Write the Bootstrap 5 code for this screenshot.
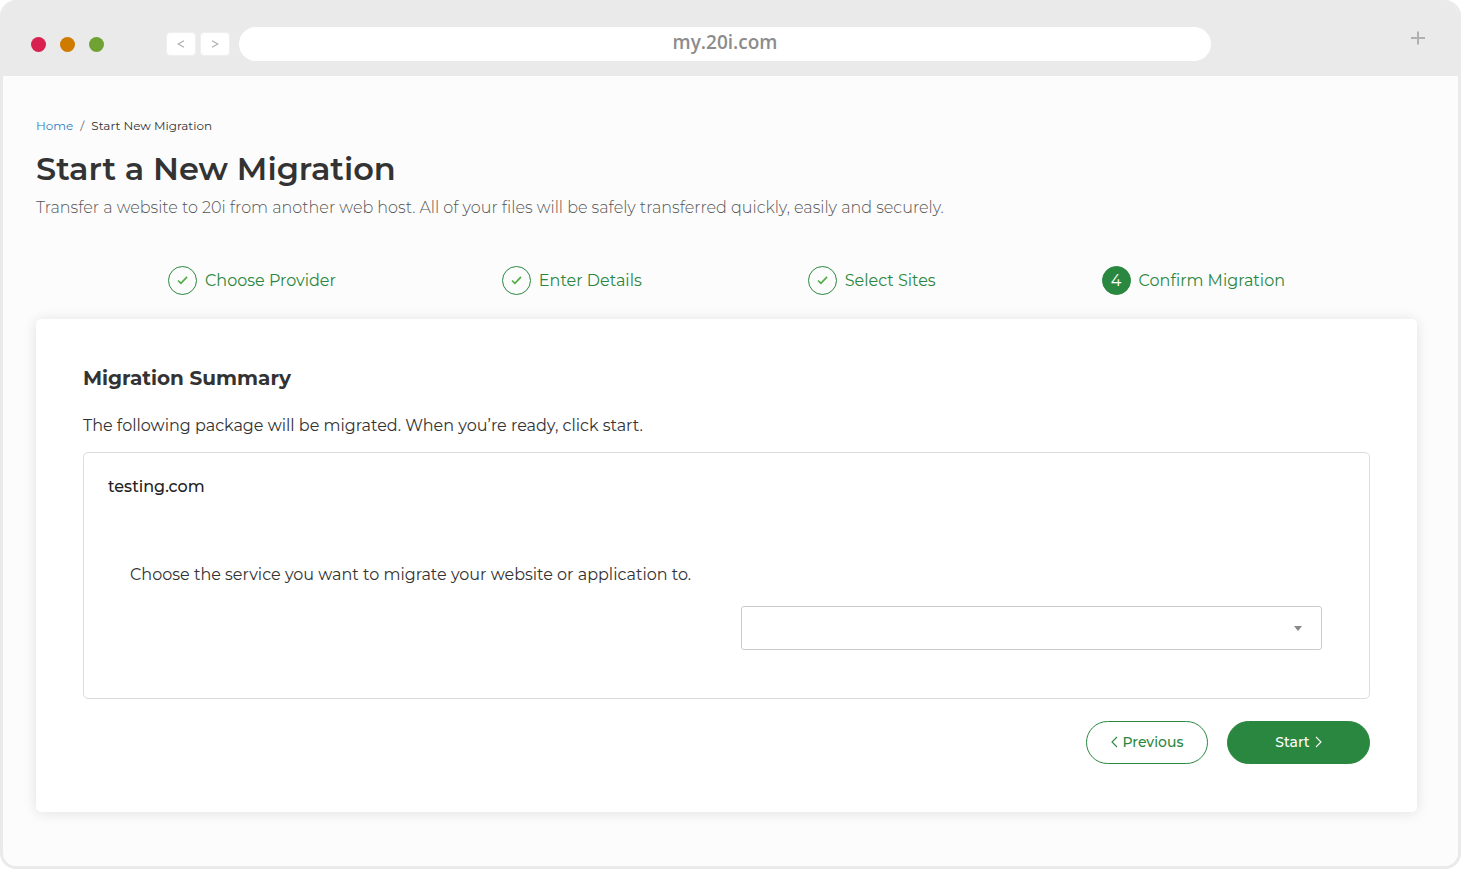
<!DOCTYPE html>
<html lang="en">
<head>
<meta charset="utf-8">
<meta name="viewport" content="width=device-width, initial-scale=1">
<title>Start a New Migration</title>
<link href="https://cdn.jsdelivr.net/npm/bootstrap@5.3.0/dist/css/bootstrap.min.css" rel="stylesheet">
<style>
  :root { --green: #2a873f; --chrome: #eaeaea; --ink: #333; }
  body { font-family: Montserrat, Inter, "Liberation Sans", sans-serif; font-size: 16px; line-height: 24px; color: var(--ink); background: #fff; }
  .browser { min-height: 100vh; padding-bottom: 1px; }
  .browser-frame { border: 3px solid var(--chrome); border-top: 0; border-radius: 16px; background: #fcfcfc; }
  .browser-bar { background: var(--chrome); height: 76px; padding: 12px 33px 0 28px; }
  .dots { gap: 14px; }
  .dot { width: 15px; height: 15px; border-radius: 50%; }
  .dot-red { background: #d92150; } .dot-amber { background: #cf7a00; } .dot-green { background: #6fa232; }
  .keys { margin: 0 9px 0 62px; }
  .nav-key { width: 30px; height: 24px; border: 1px solid #efefef; border-radius: 4px; background: #fff; color: #b0b0b0; }
  .address { min-width: 0; height: 34px; margin-right: 200px; border: 0; border-radius: 17px; background: #fff; color: #8c8c8c; font: 600 19px/30px "Open Sans", sans-serif; padding: 0 0 4px; text-align: center; }
  .new-tab { border: 0; background: none; padding: 0 0 12px; color: #b0b0b0; }
  .page { padding: 38px 41px 50px 33px; }
  .breadcrumb { font-size: 12px; margin-bottom: 7px; --bs-breadcrumb-item-padding-x: 7px; --bs-breadcrumb-item-active-color: #333; }
  .breadcrumb a { color: #2f7fc4; }
  h1 { font-size: 32px; line-height: 40px; font-weight: 600; margin-bottom: 7px; }
  .intro { color: #555; font-weight: 300; }
  .steps { padding: 0 132px; margin: 46px 0 24px; color: var(--green); }
  .step-mark { width: 29px; height: 29px; border: 1px solid var(--green); border-radius: 50%; }
  .step-mark.current { background: var(--green); color: #fff; }
  .panel { background: #fff; border-radius: 5px; box-shadow: 0 1px 14px rgba(0,0,0,.11); padding: 47px 47px 48px; }
  h2 { font-size: 20px; line-height: 24px; font-weight: 700; margin-bottom: 24px; }
  .notice { margin-bottom: 14px; }
  .site { border: 1px solid #dcdcdc; border-radius: 5px; padding: 22px 24px 48px; }
  .site h3 { font-size: 16px; line-height: 24px; font-weight: 500; color: #222; }
  .choice { padding: 64px 23px 0 22px; }
  .choice .row { --bs-gutter-x: 30px; margin-top: 19px; }
  .service { height: 44px; border: 1px solid #ccc; border-radius: 3px; background-position: right 19px center; background-size: 8px 5px;
    background-image: url("data:image/svg+xml,%3Csvg xmlns='http://www.w3.org/2000/svg' viewBox='0 0 8 5'%3E%3Cpath fill='%23888' d='M0 0h8L4 5z'/%3E%3C/svg%3E"); }
  .actions { gap: 19px; margin-top: 22px; }
  .btn-step { height: 43px; border-radius: 22px; font-size: 14px; font-weight: 500; border-color: var(--green); --bs-btn-color: var(--green); --bs-btn-hover-color: #fff; --bs-btn-hover-bg: #206c31; }
  .btn-prev { width: 122px; background: #fff; }
  .btn-start { width: 143px; background: var(--green); --bs-btn-color: #fff; }
</style>
</head>
<body>
<div class="browser d-flex flex-column">
  <div class="browser-frame flex-grow-1 overflow-hidden">
    <header class="browser-bar d-flex align-items-center">
      <div class="dots d-flex flex-shrink-0">
        <span class="dot dot-red"></span><span class="dot dot-amber"></span><span class="dot dot-green"></span>
      </div>
      <div class="keys d-flex gap-1 flex-shrink-0">
        <button class="nav-key p-0 d-flex align-items-center justify-content-center" type="button" aria-label="Back"><svg width="8" height="8" viewBox="0 0 8 8" fill="none" stroke="currentColor" stroke-width="1.3"><path d="M7 .8 1.2 4 7 7.2"/></svg></button>
        <button class="nav-key p-0 d-flex align-items-center justify-content-center" type="button" aria-label="Forward"><svg width="8" height="8" viewBox="0 0 8 8" fill="none" stroke="currentColor" stroke-width="1.3"><path d="m1 .8 5.8 3.2L1 7.2"/></svg></button>
      </div>
      <input class="address flex-grow-1" type="text" value="my.20i.com" aria-label="Address">
      <button class="new-tab d-flex" type="button" aria-label="New tab"><svg width="14" height="14" viewBox="0 0 14 14" stroke="currentColor" stroke-width="2"><path d="M0 7h14M7 .5v13"/></svg></button>
    </header>

    <main class="page">
      <nav aria-label="breadcrumb">
        <ol class="breadcrumb">
          <li class="breadcrumb-item"><a class="text-decoration-none" href="#">Home</a></li>
          <li class="breadcrumb-item active" aria-current="page">Start New Migration</li>
        </ol>
      </nav>
      <h1 class="pt-1">Start a New Migration</h1>
      <p class="intro mb-0">Transfer a website to 20i from another web host. All of your files will be safely transferred quickly, easily and securely.</p>

      <ol class="steps list-unstyled d-flex justify-content-between">
        <li class="d-flex align-items-center gap-2"><span class="step-mark d-flex align-items-center justify-content-center"><svg width="11" height="9" viewBox="0 0 12 10" fill="none" stroke="#4bae43" stroke-width="1.8"><path d="m1 5 3.3 3.2L11 1"/></svg></span>Choose Provider</li>
        <li class="d-flex align-items-center gap-2"><span class="step-mark d-flex align-items-center justify-content-center"><svg width="11" height="9" viewBox="0 0 12 10" fill="none" stroke="#4bae43" stroke-width="1.8"><path d="m1 5 3.3 3.2L11 1"/></svg></span>Enter Details</li>
        <li class="d-flex align-items-center gap-2"><span class="step-mark d-flex align-items-center justify-content-center"><svg width="11" height="9" viewBox="0 0 12 10" fill="none" stroke="#4bae43" stroke-width="1.8"><path d="m1 5 3.3 3.2L11 1"/></svg></span>Select Sites</li>
        <li class="d-flex align-items-center gap-2" aria-current="step"><span class="step-mark current d-flex align-items-center justify-content-center">4</span>Confirm Migration</li>
      </ol>

      <form class="panel">
        <h2>Migration Summary</h2>
        <p class="notice">The following package will be migrated. When you’re ready, click start.</p>
        <section class="site">
          <h3 class="mb-0">testing.com</h3>
          <div class="choice">
            <label for="service">Choose the service you want to migrate your website or application to.</label>
            <div class="row justify-content-end">
              <div class="col-6"><select class="form-select service" id="service"><option value=""></option></select></div>
            </div>
          </div>
        </section>
        <div class="actions d-flex justify-content-end">
          <button class="btn btn-step btn-prev d-flex align-items-center justify-content-center gap-1 p-0" type="button"><svg width="8" height="14" viewBox="0 0 8 14" fill="none" stroke="currentColor" stroke-width="1.1"><path d="M6 1 1 6l5 5"/></svg>Previous</button>
          <button class="btn btn-step btn-start d-flex align-items-center justify-content-center gap-1 p-0" type="submit">Start<svg width="8" height="14" viewBox="0 0 8 14" fill="none" stroke="currentColor" stroke-width="1.1"><path d="m2 1 5 5-5 5"/></svg></button>
        </div>
      </form>
    </main>
  </div>
</div>
<script src="https://cdn.jsdelivr.net/npm/bootstrap@5.3.0/dist/js/bootstrap.bundle.min.js"></script>
</body>
</html>
